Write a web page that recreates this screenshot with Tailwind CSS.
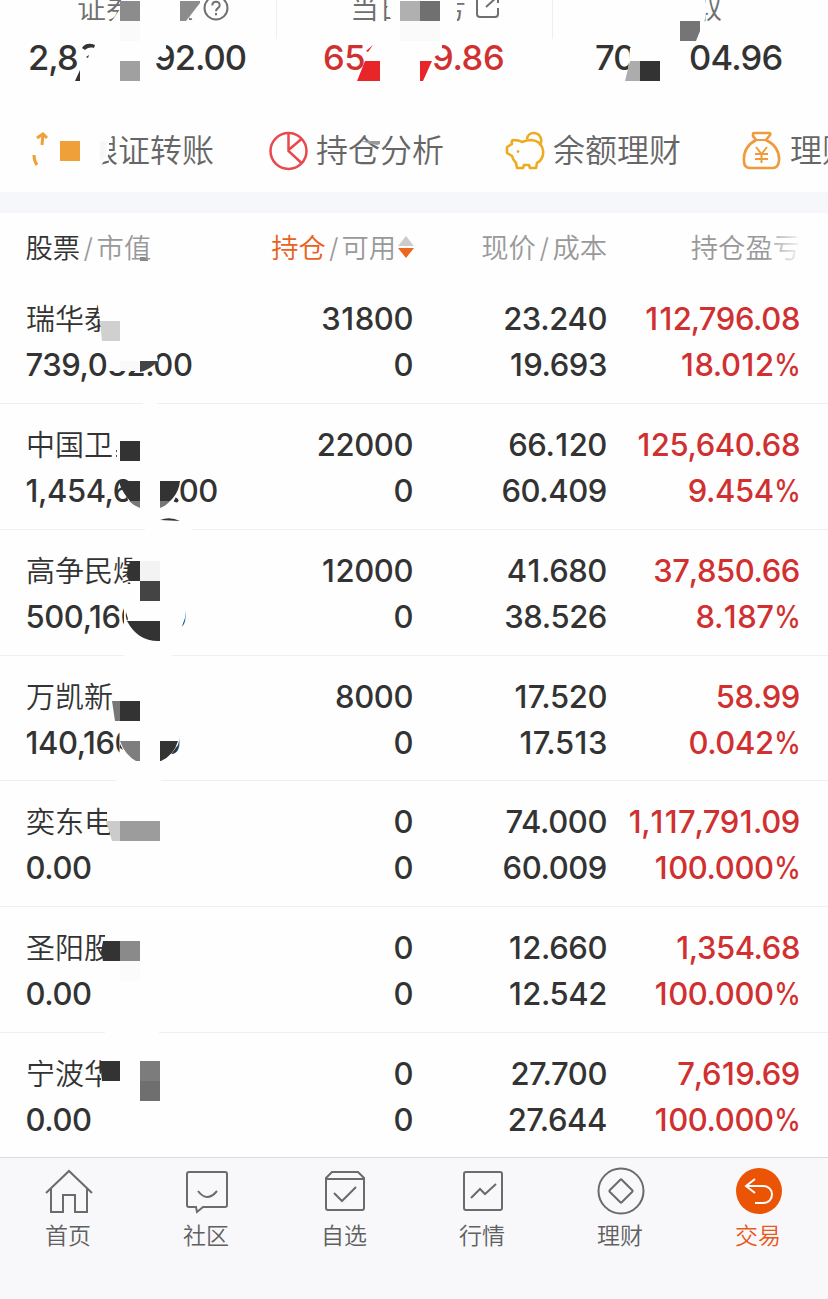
<!DOCTYPE html>
<html lang="zh-CN">

<head>
  <meta charset="UTF-8">
  <meta name="viewport" content="width=device-width, initial-scale=1.0">
  <script src="https://cdn.jsdelivr.net/npm/@tailwindcss/browser@4"></script>
  <title>持仓</title>
</head>

<body class="bg-[#fefefe] font-['Inter','Noto_Sans_CJK_SC',sans-serif] text-[#333]">
  <div class="relative flex flex-col w-[828px] h-[1299px] overflow-hidden">

    <!-- Resumen de la cuenta -->
    <section class="relative shrink-0 h-[110px]">
      <div class="grid grid-cols-[276px_276px_276px] h-[110px]">
        <div class="flex flex-col">
          <div class="flex items-center h-[18px] pl-[77px] text-[29px] font-[350] text-[#707070] whitespace-nowrap">
            <span>证券市值</span>
            <svg class="ml-[10px] shrink-0" width="26" height="26" viewBox="0 0 26 26" fill="none" stroke="#707070" stroke-width="2">
              <circle cx="13" cy="12" r="11.5" />
              <path d="M9.3 9.5c0-5 7.4-5 7.4-.3 0 3-3.700 2.800-3.700 6M13 17v2.300" />
            </svg>
          </div>
          <div class="flex h-[80px] items-center pl-[28px] text-[34.5px] tracking-[-1px] font-medium">
            <span class="w-[126px]">2,8</span><span>92.00</span>
          </div>
        </div>
        <div class="flex flex-col">
          <div class="flex items-center h-[18px] pl-[74px] text-[29px] font-[350] text-[#707070] whitespace-nowrap">
            <span>当日盈亏</span>
            <svg class="ml-[9px] shrink-0" width="27" height="26" viewBox="0 0 27 26" fill="none" stroke="#707070" stroke-width="2">
              <path d="M12 1H5Q2 1 2 4v14q0 3 3 3h15q3 0 3-3v-6M11 11 22 1M16 0h7v7" />
            </svg>
          </div>
          <div class="flex h-[80px] items-center pl-[47px] text-[34.5px] tracking-[-0.4px] font-medium text-[#d13030]">
            <span class="w-[109px]">65</span><span>9.86</span>
          </div>
        </div>
        <div class="flex flex-col">
          <div class="flex items-center h-[18px] pl-[141px] text-[29px] font-[350] text-[#707070]">取</div>
          <div class="flex h-[80px] items-center pl-[43px] text-[34.5px] tracking-[-0.8px] font-medium">
            <span class="w-[94px]">70</span><span>04.96</span>
          </div>
        </div>
      </div>
      <svg class="absolute left-0 top-0" width="828" height="110" viewBox="0 0 828 110">
        <path d="M276.500 0v39M552.500 0v39" stroke="#eeeff2" />
        <path d="M121 0h68v24h-80l5-6 8-12ZM152 42h14v10l-8 6-3 3h-4Z" fill="#fefefe" />
        <path d="M180 1h20v2l-14 18h-6Z" fill="#8c8c8c" />
        <path d="M120 1h20v20h-20Z" fill="#8c8c8c" />
        <path d="M120 61h20v20h-20Z" fill="#a0a0a0" />
        <path d="M120 21h20v20h-20Z" fill="#fafafa" />
        <path d="M80 70v11h-5ZM82 48c3-5 8-5 13-3l-1 3c-4-1-7 0-9 2ZM86 57l3-2-1 3Z" fill="#333" />
        <path d="M396 0h61v25h-61l-8-10-1-8Z" fill="#fefefe" />
        <path d="M400 1h20v20h-20Z" fill="#b0b0b0" />
        <path d="M420 1h20v20h-20Z" fill="#707070" />
        <path d="M400 21h40v20h-40Z" fill="#fafafa" />
        <path d="m428 43 14-1v7l-4 6-4 2h-6Z" fill="#fefefe" />
        <path d="m365 61h15v20h-23ZM420 61h12l-9 20h-3ZM366 51l7-6-5 7Z" fill="#e8262a" />
        <path d="M690 0h15l2 8-3 16h-14Z" fill="#fefefe" />
        <path d="M680 21h20v10l-4 10h-16Z" fill="#757575" />
        <path d="M630 48h8v24h-10l1-11Z" fill="#fefefe" />
        <path d="M630 61h10v20h-15Z" fill="#acacac" />
        <path d="M640 61h20v20h-20Z" fill="#333" />
      </svg>
    </section>

    <!-- Accesos directos -->
    <nav class="relative flex items-center shrink-0 h-[82px] text-[32px] font-[350] text-[#666] whitespace-nowrap">
      <div class="flex items-center shrink-0 w-[268px] pl-[26px]">
        <svg class="shrink-0" width="60" height="44" viewBox="26 129 60 44" fill="none" stroke="#f0a038" stroke-width="3">
          <path d="m37 138 6-4 4 4M43 134l-1 11M34 155q0 6 3 10" />
          <path d="M60 141h20v20H60Z" fill="#f0a038" stroke="none" />
        </svg>
        <span>银证转账</span>
      </div>
      <div class="flex items-center shrink-0 w-[236px]">
        <svg class="shrink-0" width="42" height="42" viewBox="268 129 42 42" fill="none" stroke="#e8494d" stroke-width="2.500">
          <circle cx="288.500" cy="150" r="18" />
          <path d="M288.500 132v18l13 12M288.500 149l13-11" />
        </svg>
        <span class="ml-[6px]">持仓分析</span>
      </div>
      <div class="flex items-center shrink-0 w-[237px]">
        <svg class="shrink-0" width="42" height="42" viewBox="504 129 42 42" fill="none" stroke="#edac20" stroke-width="2.600" stroke-linejoin="round">
          <path d="M513 139q6 0 9 2 5-2 9-2c15 1 15 19 6 23l-1 5h-6l-1-3h-5l-1 3h-6l-1-5q-3-3-4-7l-5-3v-6l5-3q-1-3 1-4Z" />
          <path d="M527 138c1-8 12-8 14 0q1 4-2 6" />
          <circle cx="518" cy="150.500" r="1" fill="#edac20" stroke-width="1" />
        </svg>
        <span class="ml-[7px]">余额理财</span>
      </div>
      <div class="flex items-center shrink-0">
        <svg class="shrink-0" width="42" height="42" viewBox="741 129 42 42" fill="none" stroke="#f09a3c" stroke-width="2.600" stroke-linejoin="round">
          <path d="M753 133q0-1 1-1h15q2 0 1 2l-4 5q14 7 13 21-1 7-6 7h-23q-6 0-6-7-1-14 12-21l-3-4Z" />
          <path d="M754 139h12M756 146l5.500 7 5.500-7M755 153h13M755 158h13M761.500 153v9" stroke-width="2" />
        </svg>
        <span class="ml-[7px]">理财</span>
      </div>
      <svg class="absolute left-[80px] top-0" width="318" height="82" viewBox="80 110 318 82">
        <path d="M80 131h34l-5 12v11l-7 10-2 9H80Z" fill="#fefefe" />
        <path d="M100 141h8l-2 8v7l-4 4h-2Z" fill="#f7f7f7" />
        <path d="M361 141h19v3l-3 1-6-1Z" fill="#999" />
      </svg>
    </nav>

    <div class="shrink-0 h-[21px] bg-[#f6f7fa]"></div>

    <!-- Cabecera de la tabla -->
    <div class="relative grid grid-cols-[240px_147px_194px_193px] shrink-0 h-[65.3px] pl-[26px] pt-[16px] text-[27.3px] leading-[40px] font-[350] text-[#999] whitespace-nowrap">
      <div class="flex gap-[3.5px] -ml-[0.5px]"><span class="text-[#333]">股票</span><span>/</span><span>市值</span></div>
      <div class="flex items-center justify-end h-[40px] -mr-px">
        <span class="text-[#ea6020]">持仓</span><span class="mx-[3px]">/</span><span>可用</span>
        <svg class="relative -top-[2px] ml-[2px] shrink-0" width="16" height="24" viewBox="0 0 16 24">
          <path d="m8 1 8 10H0Z" fill="#ccc" />
          <path d="M0 13h16L8 23Z" fill="#ee651d" />
        </svg>
      </div>
      <div class="flex justify-end gap-[3.5px]"><span>现价</span><span>/</span><span>成本</span></div>
      <div class="text-right">持仓盈亏</div>
      <div class="absolute right-[24px] top-[10px] w-[36px] h-[45px] bg-linear-to-r from-[#fefefe]/10 to-[#fefefe]"></div>
      <svg class="absolute left-[139px] top-[44px]" width="14" height="5" viewBox="0 0 14 5">
        <path d="M1 0h5l3 3v1H1Z" fill="#888" />
      </svg>
    </div>

    <main id="lista"></main>

    <!-- Barra inferior -->
    <footer class="absolute left-0 bottom-0 grid grid-cols-6 w-[828px] h-[142px] border-t border-[#dadbde] bg-[#f8f8fb] text-[23px] font-[350] text-[#606060]">
      <div class="flex flex-col items-center pt-[8px]">
        <svg width="50" height="50" viewBox="44 1166 50 50" fill="none" stroke="#6b6b6b" stroke-width="2">
          <path d="m46 1193 23-22 23 22M51 1189v23h12v-17h12v17h12v-23" />
        </svg>
        <span class="pr-[2px] leading-[40px]">首页</span>
      </div>
      <div class="flex flex-col items-center pt-[8px]">
        <svg width="50" height="50" viewBox="182 1166 50 50" fill="none" stroke="#6b6b6b" stroke-width="2">
          <path d="M189 1172h36q2 0 2 2v31q0 2-2 2h-22l-6 5-1-5h-7q-2 0-2-2v-31q0-2 2-2Z" />
          <path d="M198 1191q9 12 19 0" />
        </svg>
        <span class="pr-[2px] leading-[40px]">社区</span>
      </div>
      <div class="flex flex-col items-center pt-[8px]">
        <svg width="50" height="50" viewBox="320 1166 50 50" fill="none" stroke="#6b6b6b" stroke-width="2">
          <path d="m326 1178 6-6h26l6 6v30q0 2-2 2h-34q-2 0-2-2ZM326 1179h38M334 1193l8 8 14-14" />
        </svg>
        <span class="pr-[2px] leading-[40px]">自选</span>
      </div>
      <div class="flex flex-col items-center pt-[8px]">
        <svg width="50" height="50" viewBox="458 1166 50 50" fill="none" stroke="#6b6b6b" stroke-width="2">
          <rect x="464" y="1172" width="38" height="38" rx="2" />
          <path d="m471 1198 9-9 5 5 11-10" />
        </svg>
        <span class="pr-[2px] leading-[40px]">行情</span>
      </div>
      <div class="flex flex-col items-center pt-[8px]">
        <svg width="50" height="50" viewBox="596 1166 50 50" fill="none" stroke="#6b6b6b" stroke-width="2">
          <circle cx="621" cy="1191" r="22.500" />
          <rect x="612.500" y="1182.500" width="17" height="17" rx="1" transform="rotate(45 621 1191)" />
        </svg>
        <span class="pr-[2px] leading-[40px]">理财</span>
      </div>
      <div class="flex flex-col items-center pt-[8px] text-[#e8591c]">
        <svg width="50" height="50" viewBox="734 1166 50 50" fill="none" stroke="#fff" stroke-width="2">
          <circle cx="759" cy="1191" r="23" fill="#ea5404" stroke="none" />
          <path d="m755 1179-9 7 9 7M746 1186h17c12 0 12 17 0 17h-8" />
        </svg>
        <span class="pr-[2px] leading-[40px]">交易</span>
      </div>
    </footer>
  </div>

  <script>
    // top: origen vertical de la fila, usado por las piezas del mosaico
    const posiciones = [
      {
        top: 278, nombre: '瑞华泰', valor: '739,032.00', cantidad: '31800', disponible: '0', precio: '23.240', costo: '19.693', ganancia: '112,796.08', tasa: '18.012%',
        mosaico: `<path d="M97 300h20v36H102l-2-16ZM108 350h48l2 11-6 5-8 4-3 1h-33ZM143 402h14v3h-14Z" fill="#fefefe"/>
          <path d="M100 321h20v20h-18Z" fill="#d0d0d0"/><path d="M120 361h20v10h-20Z" fill="#f9f9f9"/><path d="M140 361h18q-8 9-18 11Z" fill="#444"/>`
      },
      {
        top: 404, nombre: '中国卫', valor: '1,454,640.00', cantidad: '22000', disponible: '0', precio: '66.120', costo: '60.409', ganancia: '125,640.68', tasa: '9.454%',
        mosaico: `<path d="M130 475h44l6 6-5 18-5 9h-40l-3-12ZM145 528h47v3h-47Z" fill="#fefefe"/>
          <path d="M116 450h1v2h-1ZM116 455h1v2h-1Z" fill="#555"/><path d="M120 481h20v20h-10q-7-8-10-16ZM120 441h20v20h-20ZM160 481h20q-1 10-7 17l-3 3h-10Z" fill="#333"/>
          <path d="M129 501h11v7q-6-2-11-7ZM160 508v-7h10q-4 5-10 7Z" fill="#777"/><path d="M160 520q10-4 20 1Z" fill="#333"/><circle cx="176.500" cy="500.500" r="2" fill="#333"/>`
      },
      {
        top: 530, nombre: '高争民爆', valor: '500,160.00', cantidad: '12000', disponible: '0', precio: '41.680', costo: '38.526', ganancia: '37,850.66', tasa: '8.187%',
        mosaico: `<path d="M133 555h18v36h-18l-5-14ZM124 600H182L185 609V618L180 632H124ZM124 654h48v3h-48Z" fill="#fefefe"/>
          <path d="M130 561h10v20h-11l-2-6ZM127 621h33v20q-22 1-33-20ZM126 612q-1 4 1 9l1-2Z" fill="#333"/>
          <path d="M140 561h20v20h-20Z" fill="#f3f3f3"/><path d="M140 581h20v20h-20Z" fill="#444"/>`
      },
      {
        top: 655, nombre: '万凯新', valor: '140,160.00', cantidad: '8000', disponible: '0', precio: '17.520', costo: '17.513', ganancia: '58.99', tasa: '0.042%',
        mosaico: `<path d="M119.500 724H178L180 736L178 744L172 752L168 760H119.500ZM116 779h45v3h-45Z" fill="#fefefe"/>
          <path d="M112 700h8v20h-5Z" fill="#777"/><path d="M120 700h20v20h-20ZM160 740h18q-4 14-17 20h-1ZM120 743l3 6-3-2Z" fill="#333"/>
          <path d="M120 740h20v20h-4q-11-6-16-20Z" fill="#7e7e7e"/>`
      },
      {
        top: 781, nombre: '奕东电', valor: '0.00', cantidad: '0', disponible: '0', precio: '74.000', costo: '60.009', ganancia: '1,117,791.09', tasa: '100.000%',
        mosaico: `<path d="M107 808h9v28h-4l-5-12Z" fill="#fefefe"/><path d="M106 821h14v20h-8Z" fill="#cbcbcb"/><path d="M120 821h40v20h-40Z" fill="#9c9c9c"/>`
      },
      {
        top: 907, nombre: '圣阳股', valor: '0.00', cantidad: '0', disponible: '0', precio: '12.660', costo: '12.542', ganancia: '1,354.68', tasa: '100.000%',
        mosaico: `<path d="M105 932h12v34h-14l2-25ZM105 1031h54v3h-54Z" fill="#fefefe"/><path d="M103 941h17v20h-17l-2-9Z" fill="#333"/><path d="M120 941h20v20h-20Z" fill="#8a8a8a"/><path d="M120 961h20v20h-20Z" fill="#fbfbfb"/>`
      },
      {
        top: 1033, nombre: '宁波华', valor: '0.00', cantidad: '0', disponible: '0', precio: '27.700', costo: '27.644', ganancia: '7,619.69', tasa: '100.000%',
        mosaico: `<path d="M101 1058h17v32h-17Z" fill="#fefefe"/><path d="M100 1061h20v20h-18Z" fill="#333"/><path d="M140 1061h20v20h-20Z" fill="#7c7c7c"/><path d="M140 1081h20v20h-20Z" fill="#6f6f6f"/>`
      }
    ];

    // Ajusta el ancho de "1", la coma y el signo de porcentaje
    function cifra(texto) {
      return texto.replace(/[1,%]/g, c => {
        if (c === '1') return '<span class="mx-[0.9px]">1</span>';
        if (c === ',') return '<span class="-mx-[0.8px]">,</span>';
        return '<span class="inline-block origin-right scale-x-86 -ml-[4px]">%</span>';
      });
    }

    function crearFila(p) {
      return `
        <div class="relative grid grid-cols-[240px_147px_194px_193px] h-[125.75px] pl-[26px] pt-[18px] border-b border-[#f0f0f2] text-[31px] leading-[46px] tracking-[-0.4px] font-medium text-right whitespace-nowrap">
          <div class="text-left"><p class="pt-px -mb-px text-[29px] tracking-normal font-[350]">${p.nombre}</p><p class="-ml-[0.5px]">${p.valor}</p></div>
          <div><p>${cifra(p.cantidad)}</p><p>${p.disponible}</p></div>
          <div><p>${cifra(p.precio)}</p><p>${cifra(p.costo)}</p></div>
          <div class="text-[#d13030]"><p>${cifra(p.ganancia)}</p><p>${cifra(p.tasa)}</p></div>
          <svg class="absolute left-0 top-0 overflow-visible" width="280" height="126" viewBox="0 ${p.top} 280 126">${p.mosaico}</svg>
        </div>`;
    }

    document.getElementById('lista').innerHTML = posiciones.map(crearFila).join('');
  </script>
</body>

</html>
